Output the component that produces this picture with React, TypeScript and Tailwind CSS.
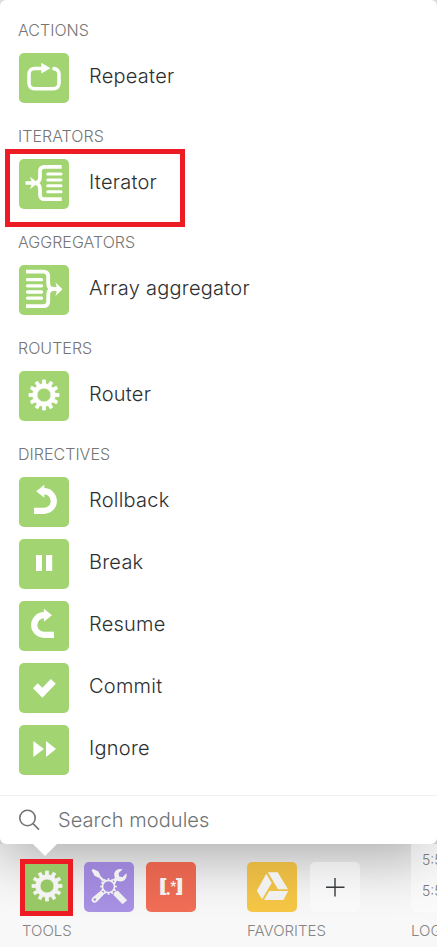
import type { ReactNode } from "react";
import { clsx } from "clsx";

type Module = { title: string; icon: ReactNode; highlighted?: boolean };

function gearPath(cx: number, cy: number, outer: number, inner: number, teeth: number) {
    const points: string[] = [];
    const step = (Math.PI * 2) / teeth;
    for (let i = 0; i < teeth; i++) {
        const a = i * step - Math.PI / 2;
        [
            [inner, -0.27],
            [outer, -0.19],
            [outer, 0.19],
            [inner, 0.27],
        ].forEach(([r, k]) => {
            points.push(`${(cx + r * Math.cos(a + k * step)).toFixed(2)} ${(cy + r * Math.sin(a + k * step)).toFixed(2)}`);
        });
    }
    return `M${points.join("L")}Z`;
}

function ring(cx: number, cy: number, r: number) {
    return `M${cx - r} ${cy}a${r} ${r} 0 1 0 ${r * 2} 0a${r} ${r} 0 1 0 ${-r * 2} 0Z`;
}

const GearIcon = () => (
    <path fillRule="evenodd" stroke="currentColor" strokeWidth="0.8" strokeLinejoin="round" d={gearPath(25, 24, 15.1, 11.2, 12) + ring(25, 24, 7)} />
);

const RepeaterIcon = () => (
    <>
        <path d="M23 15.5H15.5a5.5 5.5 0 0 0-5.5 5.5v9.3a5.5 5.5 0 0 0 5.5 5.5h19a5.5 5.5 0 0 0 5.5-5.5V21a5.5 5.5 0 0 0-5-5.4" fill="none" stroke="currentColor" strokeWidth="3.6" strokeLinecap="round" />
        <path d="M22.3 9.7 31.5 15.3 22.3 20.5Z" />
    </>
);

const IteratorIcon = () => (
    <>
        <path d="M42.7 7.9H25.5Q21 7.9 21 12.5V18Q21 22.5 17 24Q21 25.5 21 30V35.5Q21 40.2 25.5 40.2H42.7M6.5 24H16" fill="none" stroke="currentColor" strokeWidth="3.7" />
        <path d="M28.8 15H42M28.8 21H42M28.8 26.8H42M28.8 32.7H42" stroke="currentColor" strokeWidth="3.1" strokeLinecap="round" />
        <path d="M11 17.8 19 24 11 30.2 13 24Z" />
    </>
);

const AggregatorIcon = () => (
    <>
        <path d="M7 6.7H24.5Q29.2 6.7 29.2 11.5V18.5Q29.2 24 35 24Q29.2 24 29.2 29.5V36.5Q29.2 41.2 24.5 41.2H7M31.5 24H40" fill="none" stroke="currentColor" strokeWidth="3.8" />
        <path d="M8.5 14.7H22.5M8.5 20.8H22.5M8.5 27H22.5M8.5 33.2H22.5" stroke="currentColor" strokeWidth="3.3" strokeLinecap="round" />
        <path d="M36.5 17.6 43.5 24.2 36.5 31 38.2 24.2Z" />
    </>
);

const RollbackIcon = () => (
    <>
        <path d="M15 33.8H25a9.8 9.8 0 0 0 0-19.6H23" fill="none" stroke="currentColor" strokeWidth="6.2" />
        <path d="M25.3 7.7V20.8L17.2 14.3Z" />
    </>
);

const ResumeIcon = () => (
    <>
        <path d="M35 33.8H25a9.8 9.8 0 0 1 0-19.6H27" fill="none" stroke="currentColor" strokeWidth="6.2" />
        <path d="M24.9 7.7V20.8L33 14.3Z" />
    </>
);

const BreakIcon = () => <path d="M17 16h6v16h-6zM27 16h6.2v16H27z" />;
const CommitIcon = () => <path d="M14 25.3 18.7 20.2 23.4 24.8 31.8 16 36.8 20.7 23.4 34.7Z" />;
const IgnoreIcon = () => <path d="M14.4 16 24.9 24 14.4 32ZM27 16 37 24 27 32Z" />;

const ToolboxIcon = () => (
    <>
        <path fillRule="evenodd" d={gearPath(24.5, 24.5, 8.4, 6.7, 12) + ring(24.5, 24.5, 5.2)} />
        <path d="M7.5 8.2 9.2 6.9 14.5 9.5 16.7 14.2 20.8 18.3 19.2 19.9 15 15.8 10.7 14Z" />
        <path d="M33.8 28.8 43.2 38.2 38.5 42.2 29.3 32.8Q30 29.5 33.8 28.8Z" />
        <path d="M28.8 17.8 30.8 15.8Q28.7 10.5 33 7.7Q35.5 6.3 38.5 7.3L34.6 11.2 35.2 14.5 38.5 15.2 42.5 11.3Q43.4 15.5 40.3 18.2Q37 20.7 33.2 18.8L31.2 20.6Z" />
        <path fillRule="evenodd" d={"M16.8 28.7 20.7 31.5 13 39.8Q10.5 41.8 8.3 39.8Q6.7 37.7 8.5 35.5Z" + ring(10.8, 37.5, 1.3)} />
    </>
);

const DriveIcon = () => (
    <path d="M20.8 10.2H30.7L41 27.3H31ZM19.3 11.8 24.7 21.1 15 37.3 9.8 28.8ZM22.2 29.1H41.2L36.4 37.9H17Z" />
);

const RegexIcon = () => (
    <g fontFamily="Roboto, sans-serif" fontWeight="900">
        <text x="13" y="29.8" fontSize="17" textLength="7.4" lengthAdjust="spacingAndGlyphs">[</text>
        <text x="19.7" y="32.8" fontSize="18" textLength="5" lengthAdjust="spacingAndGlyphs">.</text>
        <text x="24.3" y="27.8" fontSize="13" textLength="6" lengthAdjust="spacingAndGlyphs">*</text>
        <text x="30" y="29.8" fontSize="17" textLength="7.4" lengthAdjust="spacingAndGlyphs">]</text>
    </g>
);

const groups: { category: string; items: Module[] }[] = [
    { category: "ACTIONS", items: [{ title: "Repeater", icon: <RepeaterIcon /> }] },
    { category: "ITERATORS", items: [{ title: "Iterator", icon: <IteratorIcon />, highlighted: true }] },
    { category: "AGGREGATORS", items: [{ title: "Array aggregator", icon: <AggregatorIcon /> }] },
    { category: "ROUTERS", items: [{ title: "Router", icon: <GearIcon /> }] },
    {
        category: "DIRECTIVES",
        items: [
            { title: "Rollback", icon: <RollbackIcon /> },
            { title: "Break", icon: <BreakIcon /> },
            { title: "Resume", icon: <ResumeIcon /> },
            { title: "Commit", icon: <CommitIcon /> },
            { title: "Ignore", icon: <IgnoreIcon /> },
        ],
    },
];

function Tile({ className, children }: { className?: string; children: ReactNode }) {
    return (
        <div className={clsx("size-[50px] shrink-0 rounded-[5px]", className)}>
            <svg viewBox="0 0 50 50" className="size-full" fill="currentColor">
                {children}
            </svg>
        </div>
    );
}

function ModulePicker() {
    return (
        <section className="relative z-10 h-[844px] rounded-md bg-white shadow-[0_14px_56px_rgba(0,0,0,0.31)]">
            <div className="flex h-[795px] flex-col gap-[23px] pt-5 pl-[19px]">
                {groups.map((group) => (
                    <div key={group.category}>
                        <h3 className="-ml-px text-base leading-5 font-light tracking-[0.03px] text-[#757575]">{group.category}</h3>
                        <ul className="mt-[13px] flex flex-col gap-3">
                            {group.items.map((item) => (
                                <li key={item.title} className="relative flex gap-5">
                                    <Tile className="bg-[#a2d572] text-white">{item.icon}</Tile>
                                    <span className="pt-2 text-xl leading-[30px] font-light tracking-[0.25px] text-[#2d2f31]">{item.title}</span>
                                    {item.highlighted && (
                                        <div className="absolute -top-2.5 -left-3.5 h-[78px] w-[180px] border-5 border-[#ed1c24]" />
                                    )}
                                </li>
                            ))}
                        </ul>
                    </div>
                ))}
            </div>
            <div className="flex h-[49px] items-center gap-[18px] border-t border-[#f0f0f0] pl-[18px] text-[#6f7376]">
                <svg viewBox="0 0 22 22" className="size-[22px]" fill="none" stroke="currentColor" strokeWidth="1.6">
                    <circle cx="9.5" cy="9" r="7.7" />
                    <path d="m15 14.6 6 6" />
                </svg>
                <span className="text-xl font-light tracking-[0.06px]">Search modules</span>
            </div>
            <svg viewBox="0 0 26 13" className="absolute top-[843px] left-8 h-[13px] w-[26px]" fill="white">
                <path d="M0 0h26L13 13Z" />
            </svg>
        </section>
    );
}

function TrayLabel({ children }: { children: ReactNode }) {
    return <span className="text-[15px] leading-[22px] font-light text-[#858585]">{children}</span>;
}

// Everything here sits above the picker's shadow except the bar itself
function Tray() {
    return (
        <footer className="flex h-[103px] bg-[#f8f8f8] pl-[22px]">
            <div className="relative z-20 flex w-[225px] shrink-0 flex-col gap-2 pt-[18px]">
                <div className="flex gap-3">
                    <div className="relative">
                        <Tile className="bg-[#97c865] text-[#f3f3f3]">
                            <GearIcon />
                        </Tile>
                        <div className="absolute -top-[3px] -left-0.5 h-[57px] w-[53px] border-5 border-[#ed1c24]" />
                    </div>
                    <Tile className="bg-linear-to-b from-[#9a82d4] to-[#a892e4] text-[#f0f0f0]">
                        <ToolboxIcon />
                    </Tile>
                    <Tile className="bg-linear-to-b from-[#e1614b] to-[#f06e56] text-[#f0f0f0]">
                        <RegexIcon />
                    </Tile>
                </div>
                <TrayLabel>TOOLS</TrayLabel>
            </div>
            <div className="relative z-20 flex w-[164px] shrink-0 flex-col gap-2 pt-[18px]">
                <div className="flex gap-[13px]">
                    <Tile className="bg-linear-to-b from-[#e2b542] to-[#f6c745] text-[#f0f0f0]">
                        <DriveIcon />
                    </Tile>
                    <Tile className="bg-white/40 text-[#353a3d]">
                        <path d="M25 16v18.5M16 25.3h18.5" stroke="currentColor" strokeWidth="1.4" />
                    </Tile>
                </div>
                <TrayLabel>FAVORITES</TrayLabel>
            </div>
            <div className="relative z-20 flex w-40 shrink-0 flex-col gap-2">
                <div className="flex h-[68px] flex-col rounded-b-[5px] bg-white/40 pl-[11px] text-sm leading-[31px] font-light text-[#777]">
                    <span>5:55 PM</span>
                    <span>5:55 PM</span>
                </div>
                <TrayLabel>LOG</TrayLabel>
            </div>
        </footer>
    );
}

export default function App() {
    return (
        <main className="relative h-[947px] w-[437px] overflow-hidden bg-[#e6e6e6] font-['Inter',sans-serif]">
            <ModulePicker />
            <Tray />
        </main>
    );
}
